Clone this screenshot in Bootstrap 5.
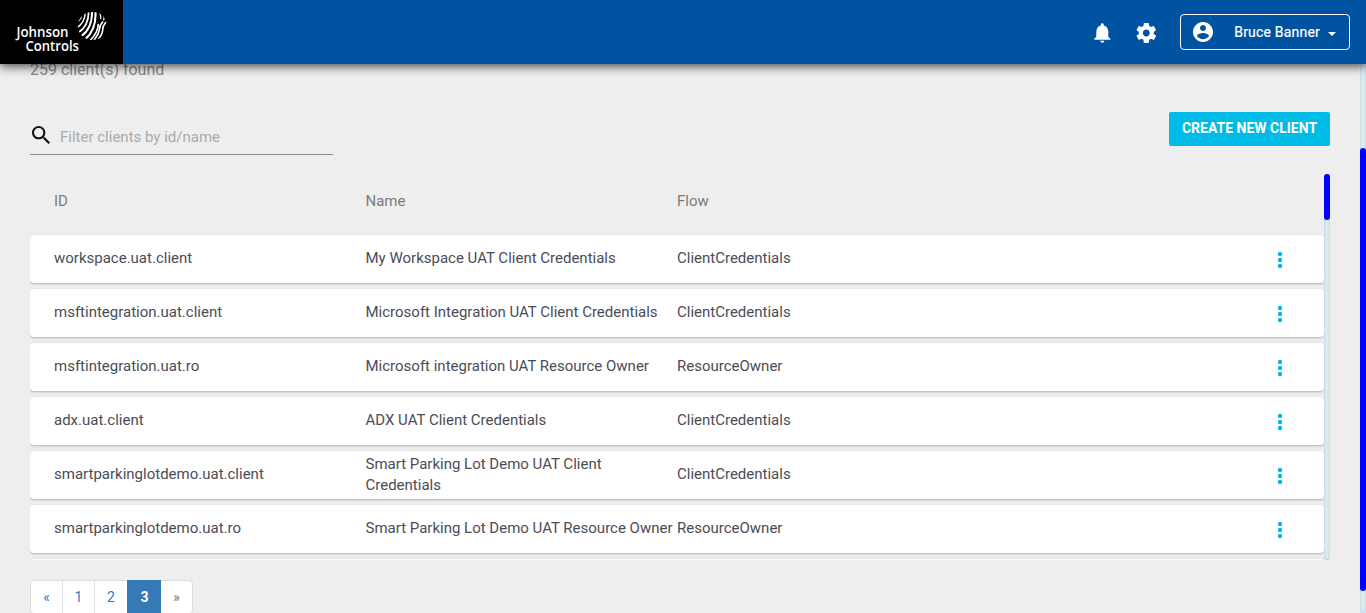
<!DOCTYPE html>
<html lang="en">
<head>
<meta charset="utf-8">
<meta name="viewport" content="width=device-width, initial-scale=1">
<title>Clients</title>
<link href="https://cdn.jsdelivr.net/npm/bootstrap@5.3.0/dist/css/bootstrap.min.css" rel="stylesheet">
<style>
  body { height: 613px; overflow: hidden; background: #eee; font-family: Roboto, sans-serif; font-size: 15px; color: #4a4d57; }
  .app-header { height: 64px; background: #0053a0; box-shadow: 0 2px 10px rgba(0,0,0,.75); z-index: 5; }
  .brand { width: 123px; background: #000; }
  .user-btn { width: 170px; height: 36px; border: 1px solid #fff; border-radius: 4px; color: #fff; font-size: 14px; padding: 0 13px 0 10px; background: none; letter-spacing: .2px; -webkit-text-stroke: .2px #fff; }
  .icon-gap { gap: 20px; margin-right: 22px; }
  .content { padding: 0 30px; height: 549px; }
  .found { font-size: 16px; line-height: 24px; height: 54px; margin-top: -6px; color: #86888c; }
  .tools { height: 62px; }
  .filter { width: 303px; height: 37px; margin-top: 6px; border-bottom: 1px solid #8b8b8b; padding-left: 2px; }
  .search-icon { margin-bottom: 2px; }
  .filter input { border: 0; background: none; padding: 2px 0 0; margin-left: 10px; width: 250px; outline: 0; color: #333; }
  .filter input::placeholder { color: #a9abab; opacity: 1; }
  .create { width: 161px; height: 34px; background: #00bbe6; color: #fff; border: 0; border-radius: 2px; font-size: 14px; font-weight: 700; padding: 0 0 2px; }
  .client-list { height: 386px; width: 1300px; }
  .rows { width: 1294px; overflow: hidden; }
  .head-row { height: 61px; padding: 0 24px 6px; color: #7b7b7b; }
  .client { height: 48px; margin-bottom: 6px; background: #fff; border-radius: 4px; padding: 0 24px; box-shadow: 0 1px 3px rgba(0,0,0,.18), 0 1px 1px rgba(0,0,0,.08); line-height: 21px; }
  .client .cell { padding-bottom: 1px; }
  .client .menu-cell { padding: 2px 18px 0 0; }
  .cell { width: 25%; }
  .scroll-track { width: 6px; border-radius: 4px; background: #dfe8ea; box-shadow: inset 0 0 2px #82cbe8; }
  .scroll-thumb { border-radius: 4px; background: #00f; }
  .inner-thumb { height: 46px; }
  .page-bar { width: 6px; padding-top: 84px; }
  .page-thumb { height: 443px; }
  .pager { margin-top: 20px; height: 34px; }
  .pager a { width: 32px; height: 34px; background: #fff; border: 1px solid #ddd; border-right: 0; color: #337ab7; font-size: 14px; line-height: 32px; text-align: center; text-decoration: none; }
  .pager a:first-child { border-radius: 4px 0 0 4px; }
  .pager a:nth-child(3) { width: 33px; }
  .pager a.on { width: 34px; background: #337ab7; border-color: #337ab7; color: #fff; font-weight: 700; }
  .pager a:last-child { border-left: 0; border-right: 1px solid #ddd; color: #777; border-radius: 0 4px 4px 0; }
</style>
</head>
<body>
<header class="app-header d-flex position-relative">
  <div class="brand">
    <svg width="123" height="64" viewBox="0 0 123 64" fill="#fff">
      <g font-family="'Open Sans', sans-serif" font-size="13.500" font-weight="600">
        <text x="16.500" y="37" textLength="52" lengthAdjust="spacingAndGlyphs">Johnson</text>
        <text x="25.500" y="51" textLength="53.500" lengthAdjust="spacingAndGlyphs">Controls</text>
      </g>
      <defs><clipPath id="globe"><ellipse cx="92.500" cy="26" rx="14.700" ry="14"/></clipPath></defs>
      <g clip-path="url(#globe)" fill="none" stroke="#fff">
        <path stroke-width="1.200" d="M77.500 21.500Q80.500 20 82 15"/>
        <path stroke-width="1.500" d="M77 27.500Q84.300 23.500 85.300 13"/>
        <path stroke-width="1.800" d="M78.500 32.500Q88.300 26.500 88.700 12"/>
        <path stroke-width="2" d="M81 36.500Q92.300 28.500 92.100 11"/>
        <path stroke-width="2.100" d="M85 39.500Q96.500 29.500 95.500 11"/>
        <path stroke-width="1.600" d="M89.500 41Q98 33 98.300 24"/>
        <path stroke-width="1.300" d="M99 12Q101.500 15.500 100.500 19"/>
        <path stroke-width="1.200" d="M102.500 13Q105 17.500 103.500 20.500"/>
        <path stroke-width="1.700" d="M103 21.500Q99.500 25 99.500 29Q98.500 35 94 40"/>
        <path stroke-width="1.700" d="M106 22Q102.500 26 102.700 30Q102 35.500 98 39.500"/>
      </g>
    </svg>
  </div>
  <div class="d-flex align-items-center ms-auto me-3">
    <div class="d-flex icon-gap">
      <svg width="24" height="24" viewBox="0 0 24 24" fill="#fff"><path transform="translate(.3 .7)" d="M12 22c1.100 0 2-.9 2-2h-4c0 1.100.89 2 2 2zm6-6v-5c0-3.070-1.640-5.640-4.500-6.320V4c0-.83-.67-1.500-1.500-1.500s-1.500.67-1.500 1.500v.68C7.630 5.360 6 7.920 6 11v5l-2 2v1h16v-1l-2-2z"/></svg>
      <svg width="24" height="24" viewBox="0 0 24 24" fill="#fff"><path transform="translate(.3 .9)" d="M19.430 12.980c.04-.32.07-.64.07-.98s-.03-.66-.07-.98l2.110-1.650c.19-.15.24-.42.12-.64l-2-3.460c-.12-.22-.39-.3-.61-.22l-2.490 1c-.52-.4-1.080-.73-1.690-.98l-.38-2.650C14.460 2.180 14.250 2 14 2h-4c-.25 0-.46.18-.49.42l-.38 2.650c-.61.25-1.170.59-1.690.98l-2.490-1c-.23-.09-.49 0-.61.22l-2 3.460c-.13.22-.07.49.12.64l2.110 1.650c-.04.32-.07.65-.07.98s.03.66.07.98l-2.110 1.650c-.19.15-.24.42-.12.64l2 3.460c.12.22.39.3.61.22l2.490-1c.52.4 1.080.73 1.690.98l.38 2.650c.03.24.24.42.49.42h4c.25 0 .46-.18.49-.42l.38-2.650c.61-.25 1.170-.59 1.690-.98l2.490 1c.23.09.49 0 .61-.22l2-3.460c.12-.22.07-.49-.12-.64l-2.110-1.650zM12 15.500c-1.930 0-3.500-1.570-3.500-3.500s1.570-3.500 3.500-3.500 3.500 1.570 3.500 3.500-1.570 3.500-3.500 3.500z"/></svg>
    </div>
    <button class="user-btn d-flex align-items-center" type="button">
      <svg width="24" height="24" viewBox="0 0 24 24" fill="#fff"><path d="M12 2C6.480 2 2 6.480 2 12s4.480 10 10 10 10-4.480 10-10S17.520 2 12 2zm0 3c1.660 0 3 1.340 3 3s-1.340 3-3 3-3-1.340-3-3 1.340-3 3-3zm0 14.200c-2.500 0-4.710-1.280-6-3.220.03-1.990 4-3.080 6-3.080 1.990 0 5.970 1.090 6 3.080-1.290 1.940-3.500 3.220-6 3.220z"/></svg>
      <span class="ms-auto">Bruce Banner</span>
      <svg class="ms-2 mt-1" width="8" height="4" viewBox="0 0 8 4" fill="#fff"><path d="M0 0h8L4 4z"/></svg>
    </button>
  </div>
</header>
<div class="d-flex">
  <main class="content flex-grow-1">
    <div class="found">259 client(s) found</div>
    <div class="d-flex justify-content-between tools">
      <div class="filter d-flex align-items-center">
        <svg class="flex-shrink-0 search-icon" width="18" height="18" viewBox="3 3 17.500 17.500" fill="#111"><path d="M15.500 14h-.79l-.28-.27C15.410 12.590 16 11.110 16 9.500 16 5.910 13.090 3 9.500 3S3 5.910 3 9.500 5.910 16 9.500 16c1.610 0 3.090-.59 4.230-1.570l.27.28v.79l5 4.990L20.490 19l-4.990-5zm-6 0C7.010 14 5 11.990 5 9.500S7.010 5 9.500 5 14 7.010 14 9.500 11.990 14 9.500 14z"/></svg>
        <input type="text" placeholder="Filter clients by id/name">
      </div>
      <button class="create" type="button">CREATE NEW CLIENT</button>
    </div>
    <section class="client-list d-flex">
      <div class="rows">
        <div class="head-row d-flex align-items-center">
          <div class="cell">ID</div><div class="cell">Name</div><div class="cell">Flow</div>
        </div>
        <div id="clients"></div>
      </div>
      <div class="scroll-track"><div class="scroll-thumb inner-thumb"></div></div>
    </section>
    <nav class="pager d-flex">
      <a href="#">«</a><a href="#">1</a><a href="#">2</a><a href="#" class="on">3</a><a href="#">»</a>
    </nav>
  </main>
  <div class="scroll-track page-bar"><div class="scroll-thumb page-thumb"></div></div>
</div>
<script src="https://cdn.jsdelivr.net/npm/bootstrap@5.3.0/dist/js/bootstrap.bundle.min.js"></script>
<script>
  const clients = [
    ['workspace.uat.client', 'My Workspace UAT Client Credentials', 'ClientCredentials'],
    ['msftintegration.uat.client', 'Microsoft Integration UAT Client Credentials', 'ClientCredentials'],
    ['msftintegration.uat.ro', 'Microsoft integration UAT Resource Owner', 'ResourceOwner'],
    ['adx.uat.client', 'ADX UAT Client Credentials', 'ClientCredentials'],
    ['smartparkinglotdemo.uat.client', 'Smart Parking Lot Demo UAT Client Credentials', 'ClientCredentials'],
    ['smartparkinglotdemo.uat.ro', 'Smart Parking Lot Demo UAT Resource Owner', 'ResourceOwner'],
    ['', '', '']
  ];
  const dots = '<svg width="4" height="16" viewBox="0 0 4 16" overflow="visible" fill="#00bbe6"><circle cx="2" cy="2" r="2.2"/><circle cx="2" cy="8" r="2.2"/><circle cx="2" cy="14" r="2.2"/></svg>';
  document.getElementById('clients').innerHTML = clients.map(c =>
    '<div class="client d-flex align-items-center">' + c.map(t => '<div class="cell">' + t + '</div>').join('') +
    '<div class="cell menu-cell d-flex justify-content-end">' + (c[0] ? dots : '') + '</div></div>').join('');
</script>
</body>
</html>
